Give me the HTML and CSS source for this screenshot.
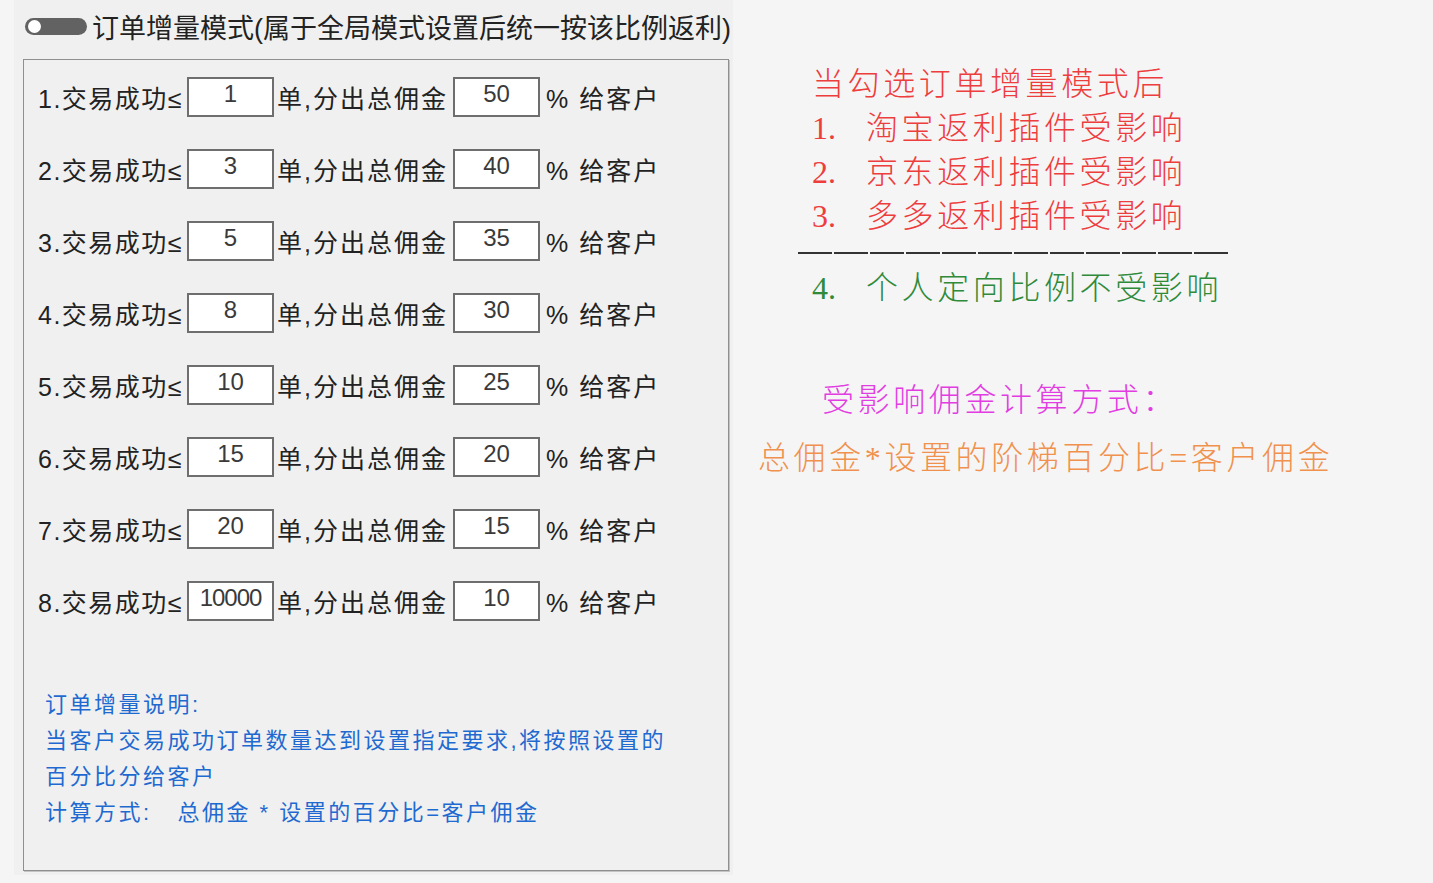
FILE: index.html
```html
<!DOCTYPE html>
<html>
<head>
    <meta charset="utf-8">
    <title>订单增量模式</title>
    <link rel="stylesheet" href="styles.css">
</head>
<body>

<div class="page">

<div class="panel">
    <div class="mode">
        <span class="toggle"></span>
        <span class="mode-title">订单增量模式(属于全局模式设置后统一按该比例返利)</span>
    </div>

    <div class="groupbox">
        <div class="row"><span class="lbl">1.交易成功≤</span><input class="num" value="1"><span class="mid">单,分出总佣金</span><input class="num" value="50"><span class="tail">% 给客户</span></div>
        <div class="row"><span class="lbl">2.交易成功≤</span><input class="num" value="3"><span class="mid">单,分出总佣金</span><input class="num" value="40"><span class="tail">% 给客户</span></div>
        <div class="row"><span class="lbl">3.交易成功≤</span><input class="num" value="5"><span class="mid">单,分出总佣金</span><input class="num" value="35"><span class="tail">% 给客户</span></div>
        <div class="row"><span class="lbl">4.交易成功≤</span><input class="num" value="8"><span class="mid">单,分出总佣金</span><input class="num" value="30"><span class="tail">% 给客户</span></div>
        <div class="row"><span class="lbl">5.交易成功≤</span><input class="num" value="10"><span class="mid">单,分出总佣金</span><input class="num" value="25"><span class="tail">% 给客户</span></div>
        <div class="row"><span class="lbl">6.交易成功≤</span><input class="num" value="15"><span class="mid">单,分出总佣金</span><input class="num" value="20"><span class="tail">% 给客户</span></div>
        <div class="row"><span class="lbl">7.交易成功≤</span><input class="num" value="20"><span class="mid">单,分出总佣金</span><input class="num" value="15"><span class="tail">% 给客户</span></div>
        <div class="row"><span class="lbl">8.交易成功≤</span><input class="num wide" value="10000"><span class="mid">单,分出总佣金</span><input class="num" value="10"><span class="tail">% 给客户</span></div>

        <div class="desc">
            <div>订单增量说明:</div>
            <div>当客户交易成功订单数量达到设置指定要求,将按照设置的</div>
            <div>百分比分给客户</div>
            <div class="pre">计算方式:   总佣金 * 设置的百分比=客户佣金</div>
        </div>
    </div>
</div>

<div class="notes">
    <div class="note red indent">当勾选订单增量模式后</div>
    <div class="note red indent"><span class="no">1.</span>淘宝返利插件受影响</div>
    <div class="note red indent"><span class="no">2.</span>京东返利插件受影响</div>
    <div class="note red indent"><span class="no">3.</span>多多返利插件受影响</div>
    <div class="divider"></div>
    <div class="note green indent"><span class="no">4.</span>个人定向比例不受影响</div>
    <div class="note magenta formula-title">受影响佣金计算方式：</div>
    <div class="note orange formula">总佣金*设置的阶梯百分比=客户佣金</div>
</div>

</div>

</body>
</html>
```

FILE: styles.css
```css
BODY {
    margin : 0;
    background-color : #f5f5f5;
    font-family : "Liberation Sans", "Noto Sans CJK SC", sans-serif;
}
.page {
    display : flex;
    width : 1433px;
    height : 883px;
    overflow : hidden;
}

/* left form panel */
.panel {
    margin-left : 14px;
    width : 719px;
    height : 875px;
    background-color : #f0f0f0;
    box-sizing : border-box;
    padding : 10px 0 0 11px;
}
.mode {
    display : flex;
    align-items : center;
    height : 32px;
}
.toggle {
    position : relative;
    width : 62px;
    height : 17px;
    border-radius : 9px;
    background-color : #626262;
    flex : none;
}
.toggle::before {
    content : "";
    position : absolute;
    left : 3px;
    top : 2px;
    width : 13px;
    height : 13px;
    border-radius : 50%;
    background-color : #fff;
}
.mode-title {
    margin-left : 5px;
    font-size : 27px;
    letter-spacing : 0;
    color : #222;
    white-space : nowrap;
}

.groupbox {
    margin : 17px 0 0 -2px;
    width : 706px;
    height : 812px;
    box-sizing : border-box;
    border : 1px solid #8f8f8f;
    box-shadow : 1px 1px 0 #c4c4c4;
    padding : 17px 0 0 14px;
}
.row {
    display : flex;
    align-items : center;
    height : 40px;
    margin-bottom : 32px;
    font-size : 25px;
    letter-spacing : 2px;
    color : #222;
    white-space : nowrap;
}
.lbl {
    width : 149px;
    letter-spacing : 1.5px;
}
.mid {
    width : 176px;
    padding-left : 3px;
}
.tail {
    padding-left : 6px;
}
.num {
    width : 87px;
    height : 40px;
    box-sizing : border-box;
    border : 2px solid #6e6e6e;
    background-color : #fff;
    padding : 0 0 7px 0;
    margin : 0;
    font-family : "Liberation Sans", sans-serif;
    font-size : 24px;
    letter-spacing : 0;
    text-align : center;
    color : #3a3a3a;
    outline : none;
}
.num.wide {
    letter-spacing : -1px;
}

.desc {
    margin : 66px 0 0 7px;
    font-size : 22px;
    line-height : 36px;
    letter-spacing : 2.5px;
    color : #1f6ad0;
    white-space : nowrap;
}
.pre {
    white-space : pre;
}

/* right notes */
.notes {
    margin-left : 25px;
    padding-top : 62px;
    display : flex;
    flex-direction : column;
    align-items : flex-start;
}
.note {
    font-family : "Liberation Serif", "Noto Sans CJK SC", serif;
    font-size : 32px;
    letter-spacing : 3.6px;
    line-height : 44px;
    white-space : nowrap;
    font-weight : 300;
}
.no {
    display : inline-block;
    width : 54px;
    letter-spacing : 0;
}
.indent {
    margin-left : 54px;
}
.red {
    color : #ee3d3d;
}
.green {
    color : #2f8a3a;
    margin-top : 12px;
}
.magenta {
    color : #e23de2;
}
.orange {
    color : #f0914e;
}
.formula-title {
    margin-left : 64px;
    margin-top : 68px;
}
.formula {
    margin-top : 14px;
}
.divider {
    margin : 14px 0 0 40px;
    width : 430px;
    height : 2px;
    background : repeating-linear-gradient(to right, #333 0, #333 34px, transparent 34px, transparent 36px);
}
```
